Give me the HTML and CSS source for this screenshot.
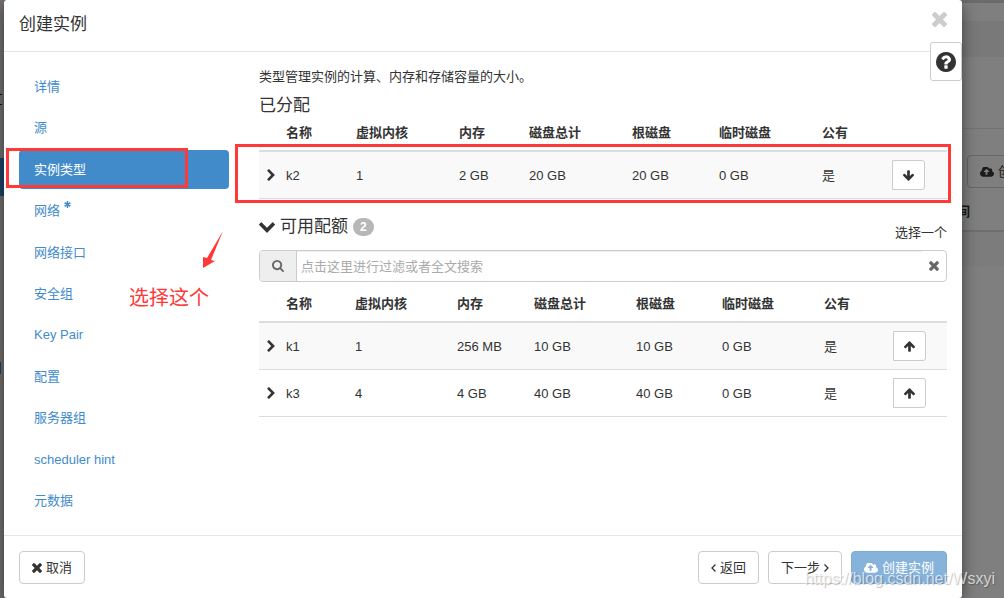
FILE: index.html
```html
<!DOCTYPE html>
<html lang="zh-CN">
<head>
<meta charset="utf-8">
<title>创建实例</title>
<link rel="stylesheet" href="styles.css">
</head>
<body>
<svg class="sprite" aria-hidden="true">
  <symbol id="times" viewBox="302 366 1188 1188"><path d="M1490 1322q0 40-28 68l-136 136q-28 28-68 28t-68-28l-294-294-294 294q-28 28-68 28t-68-28l-136-136q-28-28-28-68t28-68l294-294-294-294q-28-28-28-68t28-68l136-136q28-28 68-28t68 28l294 294 294-294q28-28 68-28t68 28l136 136q28 28 28 68t-28 68l-294 294 294 294q28 28 28 68z"/></symbol>
  <symbol id="search" viewBox="64 128 1664 1664"><path d="M1216 832q0-185-131.5-316.5t-316.5-131.5-316.5 131.5-131.5 316.5 131.5 316.5 316.5 131.5 316.5-131.5 131.5-316.5zm512 832q0 52-38 90t-90 38q-54 0-90-38l-343-342q-179 124-399 124-143 0-273.5-55.5t-225-150-150-225-55.5-273.5 55.5-273.5 150-225 225-150 273.5-55.5 273.5 55.5 225 150 150 225 55.5 273.5q0 220-124 399l343 343q37 37 37 90z"/></symbol>
  <symbol id="chevron-right" viewBox="346 20 1036 1624"><path d="M1363 877l-742 742q-19 19-45 19t-45-19l-166-166q-19-19-19-45t19-45l531-531-531-531q-19-19-19-45t19-45l166-166q19-19 45-19t45 19l742 742q19 19 19 45t-19 45z"/></symbol>
  <symbol id="chevron-down" viewBox="90 533 1612 1036"><path d="M1683 808l-742 741q-19 19-45 19t-45-19l-742-741q-19-19-19-45.500t19-45.500l166-165q19-19 45-19t45 19l531 531 531-531q19-19 45-19t45 19l166 165q19 19 19 45.500t-19 45.500z"/></symbol>
  <symbol id="arrow-up" viewBox="117 190 1558 1474"><path d="M1675 971q0 51-37 90l-75 75q-38 38-91 38-54 0-90-38l-294-293v704q0 52-37.500 84.500t-90.500 32.500h-128q-53 0-90.500-32.500t-37.500-84.500v-704l-294 293q-36 38-90 38t-90-38l-75-75q-38-38-38-90 0-53 38-91l651-651q35-37 90-37 54 0 91 37l651 651q37 39 37 91z"/></symbol>
  <symbol id="cloud-upload" viewBox="-64 256 1920 1280"><path d="M1216 864q0-14-9-23l-352-352q-9-9-23-9t-23 9l-351 351q-10 12-10 24 0 14 9 23t23 9h224v352q0 13 9.500 22.500t22.500 9.500h192q13 0 22.500-9.500t9.500-22.500v-352h224q13 0 22.500-9.500t9.500-22.500zm640 288q0 159-112.500 271.500t-271.500 112.500h-1088q-185 0-316.500-131.500t-131.500-316.500q0-130 70-240t188-165q-2-30-2-43 0-212 150-362t362-150q156 0 285.500 87t188.500 231q71-62 166-62 106 0 181 75t75 181q0 76-41 138 130 31 213.500 135.500t83.500 238.500z"/></symbol>
  <symbol id="question" viewBox="128 128 1536 1536"><path d="M1024 1376v-192q0-14-9-23t-23-9h-192q-14 0-23 9t-9 23v192q0 14 9 23t23 9h192q14 0 23-9t9-23zm256-672q0-88-55.500-163t-138.500-116-170-41q-243 0-371 213-15 24 8 42l132 100q7 6 19 6 16 0 25-12 53-68 86-92 34-24 86-24 48 0 85.500 26t37.500 59q0 38-20 61t-68 45q-63 28-115.500 86.500t-52.500 125.500v36q0 14 9 23t23 9h192q14 0 23-9t9-23q0-19 21.500-49.500t54.500-49.500q32-18 49-28.500t46-35 44.500-48 28-60.500 12.500-81zm384 192q0 209-103 385.500t-279.500 279.500-385.500 103-385.500-103-279.500-279.500-103-385.500 103-385.500 279.500-279.500 385.500-103 385.500 103 279.500 279.500 103 385.500z"/></symbol>
  <symbol id="asterisk" viewBox="0 0 12 12"><path d="M6 0v12M1 3l10 6M11 3L1 9" stroke="currentColor" stroke-width="2.600"/></symbol>
  <symbol id="angle-left" viewBox="0 0 5 8"><path d="M4.500.5L1 4l3.500 3.500" fill="none" stroke="currentColor" stroke-width="1.300"/></symbol>
  <symbol id="angle-right" viewBox="0 0 5 8"><path d="M.5.5L4 4 .5 7.500" fill="none" stroke="currentColor" stroke-width="1.300"/></symbol>
</svg>

<div class="backdrop">
  <div class="side-menu"><span class="side-mark"></span><span class="side-active"></span><span class="side-link"></span></div>
  <div class="page">
    <div class="page-top"></div>
    <div class="page-bar"></div>
    <div class="page-head"></div>
    <div class="page-tools"><button class="page-button" type="button"><svg class="icon-cloud"><use href="#cloud-upload"/></svg>创建实例</button></div>
    <div class="page-columns">间</div>
    <div class="page-row"></div>
  </div>
</div>

<div class="modal" role="dialog" aria-labelledby="title">
  <header class="modal-header">
    <h1 class="modal-title" id="title">创建实例</h1>
    <button class="close" type="button" aria-label="关闭"><svg class="icon-close"><use href="#times"/></svg></button>
  </header>
  <button class="help" type="button" aria-label="帮助"><svg class="icon-help"><use href="#question"/></svg></button>

  <div class="modal-body">
    <nav class="steps">
      <a class="step" href="#">详情</a>
      <a class="step" href="#">源</a>
      <a class="step step-active" href="#">实例类型</a>
      <a class="step" href="#">网络<svg class="icon-required"><use href="#asterisk"/></svg></a>
      <a class="step" href="#">网络接口</a>
      <a class="step" href="#">安全组</a>
      <a class="step" href="#">Key Pair</a>
      <a class="step" href="#">配置</a>
      <a class="step" href="#">服务器组</a>
      <a class="step" href="#">scheduler hint</a>
      <a class="step" href="#">元数据</a>
    </nav>

    <main class="content">
      <p class="intro">类型管理实例的计算、内存和存储容量的大小。</p>
      <h2 class="section-title">已分配</h2>
      <table class="flavors allocated">
        <colgroup><col class="w19"><col class="w70"><col class="w103"><col class="w70"><col class="w103"><col class="w87"><col class="w103"><col class="w70"><col class="w63"></colgroup>
        <thead><tr><th></th><th>名称</th><th>虚拟内核</th><th>内存</th><th>磁盘总计</th><th>根磁盘</th><th>临时磁盘</th><th>公有</th><th></th></tr></thead>
        <tbody>
          <tr><td class="toggle"><svg class="icon-expand"><use href="#chevron-right"/></svg></td><td>k2</td><td>1</td><td>2 GB</td><td>20 GB</td><td>20 GB</td><td>0 GB</td><td>是</td><td><button class="move" type="button" aria-label="移除 k2"><svg class="icon-arrow icon-down"><use href="#arrow-up"/></svg></button></td></tr>
        </tbody>
      </table>

      <div class="available-head">
        <h2 class="section-title available-title"><svg class="icon-collapse"><use href="#chevron-down"/></svg>可用配额<span class="badge">2</span></h2>
        <span class="pick-one">选择一个</span>
      </div>
      <div class="filter">
        <label class="filter-addon" for="filter" aria-label="过滤"><svg class="icon-search"><use href="#search"/></svg></label>
        <input class="filter-input" id="filter" type="text" placeholder="点击这里进行过滤或者全文搜索">
        <button class="filter-clear" type="button" aria-label="清除"><svg class="icon-x"><use href="#times"/></svg></button>
      </div>
      <table class="flavors">
        <colgroup><col class="w19"><col class="w69"><col class="w102"><col class="w77"><col class="w102"><col class="w86"><col class="w102"><col class="w69"><col class="w62"></colgroup>
        <thead><tr><th></th><th>名称</th><th>虚拟内核</th><th>内存</th><th>磁盘总计</th><th>根磁盘</th><th>临时磁盘</th><th>公有</th><th></th></tr></thead>
        <tbody>
          <tr><td class="toggle"><svg class="icon-expand"><use href="#chevron-right"/></svg></td><td>k1</td><td>1</td><td>256 MB</td><td>10 GB</td><td>10 GB</td><td>0 GB</td><td>是</td><td><button class="move" type="button" aria-label="分配 k1"><svg class="icon-arrow"><use href="#arrow-up"/></svg></button></td></tr>
          <tr><td class="toggle"><svg class="icon-expand"><use href="#chevron-right"/></svg></td><td>k3</td><td>4</td><td>4 GB</td><td>40 GB</td><td>40 GB</td><td>0 GB</td><td>是</td><td><button class="move" type="button" aria-label="分配 k3"><svg class="icon-arrow"><use href="#arrow-up"/></svg></button></td></tr>
        </tbody>
      </table>
    </main>
  </div>

  <footer class="modal-footer">
    <button class="button button-cancel" type="button"><svg class="icon-x"><use href="#times"/></svg>取消</button>
    <button class="button" type="button"><svg class="icon-angle"><use href="#angle-left"/></svg>返回</button>
    <button class="button" type="button">下一步<svg class="icon-angle"><use href="#angle-right"/></svg></button>
    <button class="button button-primary" type="button"><svg class="icon-cloud"><use href="#cloud-upload"/></svg>创建实例</button>
  </footer>
</div>

<div class="mark mark-step"></div>
<div class="mark mark-row"></div>
<svg class="mark-arrow" viewBox="0 0 22 40"><path d="M21 2L9 31l4 1L1 39V28l4 1z"/></svg>
<div class="mark-note">选择这个</div>
<div class="watermark">https://blog.csdn.net/Wsxyi</div>
</body>
</html>
```
FILE: styles.css
```css
* { box-sizing: border-box; }

body {
  margin: 0;
  min-height: 100vh;
  position: relative;
  overflow: hidden;
  background: #7f7f7f;
  color: #333;
  font: 13px/19px "Liberation Sans", "Noto Sans CJK SC", sans-serif;
}

button, input { font: inherit; color: inherit; }
button { cursor: pointer; }
svg { fill: currentColor; flex: none; display: block; }
.sprite { position: absolute; width: 0; height: 0; }

/* Page under the dialog */
.backdrop {
  position: absolute;
  inset: 0;
  display: flex;
  overflow: hidden;
}
.side-menu {
  width: 4px;
  background: #73706e;
  display: flex;
  flex-direction: column;
}
.side-mark {
  width: 2px;
  height: 11px;
  margin-top: 94px;
  border: solid #111;
  border-width: 1px 0;
}
.side-active { height: 38px; margin-top: 53px; background: #1e4468; }
.side-link { width: 1px; height: 12px; margin-top: 166px; background: #20446a; }
.page { flex: 1; }
.page-top { height: 21px; border-top: 3px solid #6b6b6b; }
.page-bar { height: 36px; background: #797979; }
.page-head { height: 72px; border-bottom: 1px solid #737373; }
.page-tools { padding-top: 26px; margin-left: calc(100% - 37px); }
.page-button {
  display: flex;
  align-items: center;
  gap: 4px;
  height: 33px;
  padding: 0 12px;
  white-space: nowrap;
  color: #1a1a1a;
  background: #7f7f7f;
  border: 1px solid #666;
  border-radius: 4px;
}
.page-columns {
  padding: 14px 34px 9px 0;
  height: 44px;
  border-bottom: 2px solid #6e6e6e;
  color: #1a1a1a;
  font-weight: bold;
  text-align: right;
}
.page-row { height: 34px; background: #7c7c7c; }

/* Dialog */
.modal {
  position: relative;
  display: flex;
  flex-direction: column;
  min-height: 100vh;
  margin: 0 42px 0 4px;
  background: #fff;
  border-radius: 3px;
  box-shadow: 0 5px 15px rgba(0, 0, 0, .5);
}
.modal-header {
  display: flex;
  justify-content: space-between;
  align-items: flex-start;
  height: 52px;
  padding: 12px 15px;
  border-bottom: 1px solid #e5e5e5;
}
.modal-title { margin: 0; font-size: 17px; line-height: 26px; font-weight: normal; }
.close { padding: 0; border: 0; background: none; color: #ccc; }
.icon-close { width: 15px; height: 15px; }
.help {
  position: absolute;
  top: 42px;
  right: 0;
  width: 32px;
  height: 39px;
  padding: 0 5px;
  background: #fff;
  border: 1px solid #ccc;
  border-radius: 3px;
}
.icon-help { width: 20px; height: 20px; }
.modal-body {
  flex: 1;
  display: grid;
  grid-template-columns: 210px 1fr;
  gap: 30px;
  padding: 15px;
}

.steps { display: flex; flex-direction: column; justify-content: space-between; }
.step {
  display: flex;
  gap: 4px;
  padding: 10px 15px;
  color: #428bca;
  text-decoration: none;
  border-radius: 4px;
}
.step-active { background: #428bca; color: #fff; }
.icon-required { width: 7px; height: 7px; }

.intro { margin: 0; }
.section-title { margin: 9px 0 0; font-size: 17px; line-height: 22px; font-weight: normal; }
.flavors {
  width: 100%;
  table-layout: fixed;
  border-collapse: separate;
  border-spacing: 0;
}
.flavors th {
  height: 41px;
  padding: 3px 0 0 8px;
  text-align: left;
  border-bottom: 2px solid #ddd;
}
.allocated th { height: 35px; padding: 0 0 3px 8px; }
.flavors td {
  height: 47px;
  padding: 0 0 0 8px;
  border-bottom: 1px solid #ddd;
  white-space: nowrap;
}
.flavors tbody tr:nth-child(odd) { background: #f9f9f9; }
.w19 { width: 19px; }
.w62 { width: 62px; }
.w63 { width: 63px; }
.w69 { width: 69px; }
.w70 { width: 70px; }
.w77 { width: 77px; }
.w86 { width: 86px; }
.w87 { width: 87px; }
.w102 { width: 102px; }
.w103 { width: 103px; }
.icon-expand { width: 8px; height: 12px; }
.move {
  display: flex;
  align-items: center;
  justify-content: center;
  width: 33px;
  height: 30px;
  padding: 0;
  background: #fff;
  border: 1px solid #ccc;
  border-radius: 0 3px 3px 0;
}
.icon-arrow { width: 11px; height: 11px; }
.icon-down { transform: rotate(180deg); }

.available-head {
  display: flex;
  justify-content: space-between;
  align-items: flex-end;
  padding: 17px 0 8px;
}
.available-title { display: flex; align-items: center; gap: 5px; margin: 0 0 4px; }
.icon-collapse { width: 16px; height: 11px; }
.badge {
  padding: 0 7px;
  background: #b7b7b7;
  color: #fff;
  border-radius: 9px;
  font: bold 12px/18px "Liberation Sans", sans-serif;
}
.filter {
  display: flex;
  align-items: center;
  height: 32px;
  border: 1px solid #ccc;
  border-radius: 4px;
  overflow: hidden;
}
.filter-addon {
  display: flex;
  align-items: center;
  justify-content: center;
  align-self: stretch;
  width: 37px;
  background: #eee;
  border-right: 1px solid #ccc;
  color: #666;
}
.icon-search { width: 12px; height: 12px; }
.filter-input {
  flex: 1;
  min-width: 0;
  align-self: stretch;
  padding: 0 4px;
  border: 0;
  outline: 0;
  background: #fff;
  box-shadow: inset 0 1px 1px rgba(0, 0, 0, .07);
}
.filter-input::placeholder { color: #aaa; opacity: 1; }
.filter-clear { padding: 0 7px; border: 0; background: none; color: #666; }

.modal-footer {
  display: flex;
  gap: 9px;
  padding: 15px 15px 14px;
  border-top: 1px solid #e5e5e5;
}
.button {
  display: flex;
  align-items: center;
  gap: 4px;
  height: 33px;
  padding: 0 12px;
  background: #fff;
  border: 1px solid #ccc;
  border-radius: 4px;
  white-space: nowrap;
}
.button-cancel { margin-right: auto; }
.button-primary { background: #86b3dc; border-color: #7eacd6; color: #fff; }
.icon-x { width: 10px; height: 10px; }
.icon-angle { width: 5px; height: 8px; }
.icon-cloud { width: 14px; height: 10px; }

/* Annotations drawn over the dialog */
.mark { position: absolute; border: 3px solid #ff3838; pointer-events: none; }
.mark-step { left: 6px; top: 148px; width: 182px; height: 40px; }
.mark-row { left: 235px; right: 53px; top: 144px; height: 59px; }
.mark-arrow { position: absolute; left: 202px; top: 229px; width: 22px; height: 40px; fill: #ff3838; }
.mark-note {
  position: absolute;
  left: 129px;
  top: 285px;
  color: #ff3838;
  font-size: 20px;
  line-height: 26px;
}
.watermark {
  position: absolute;
  right: 9px;
  bottom: 8px;
  color: rgba(255, 255, 255, .7);
  font-size: 16px;
  line-height: 22px;
  text-shadow: 1px 1px 1px rgba(0, 0, 0, .25);
  pointer-events: none;
}
```
